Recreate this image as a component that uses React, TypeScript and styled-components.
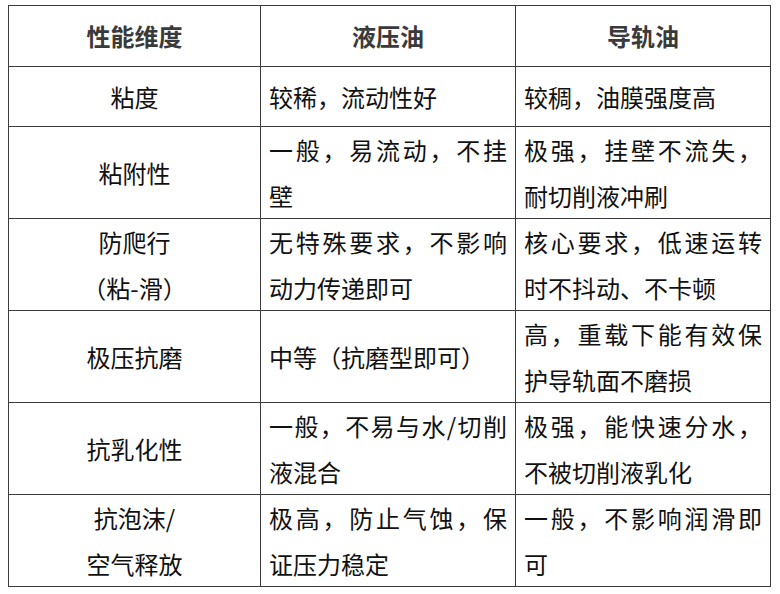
import styled, { createGlobalStyle } from "styled-components";

const GlobalStyle = createGlobalStyle`
  html, body {
    margin: 0;
    padding: 0;
    background: #ffffff;
  }
`;

const Page = styled.div`
  padding: 5px 11px 0 8px;
  font-family: "Noto Sans CJK SC", "Noto Sans", sans-serif;
`;

const Table = styled.table`
  width: 762px;
  border-collapse: collapse;
  table-layout: fixed;
`;

const HeadCell = styled.th`
  border: 1px solid #3c3c3c;
  padding: 7px 8px;
  font-size: 24px;
  font-weight: 700;
  color: #3a3a3a;
  text-align: center;
  vertical-align: middle;
  line-height: 46px;
`;

const Cell = styled.td<{ $center?: boolean; $tall?: boolean }>`
  border: 1px solid #3c3c3c;
  padding: ${({ $tall }) => ($tall ? "0 8px" : "6.75px 8px")};
  font-size: 24px;
  color: #111;
  line-height: 45.5px;
  vertical-align: middle;
  text-align: ${({ $center }) => ($center ? "center" : "justify")};
  word-break: break-all;
`;

const rows: { name: string[]; hydraulic: string; guide: string; tall?: boolean }[] = [
  { name: ["粘度"], hydraulic: "较稀，流动性好", guide: "较稠，油膜强度高" },
  { name: ["粘附性"], hydraulic: "一般，易流动，不挂壁", guide: "极强，挂壁不流失，耐切削液冲刷", tall: true },
  { name: ["防爬行", "（粘-滑）"], hydraulic: "无特殊要求，不影响动力传递即可", guide: "核心要求，低速运转时不抖动、不卡顿", tall: true },
  { name: ["极压抗磨"], hydraulic: "中等（抗磨型即可）", guide: "高，重载下能有效保护导轨面不磨损", tall: true },
  { name: ["抗乳化性"], hydraulic: "一般，不易与水/切削液混合", guide: "极强，能快速分水，不被切削液乳化", tall: true },
  { name: ["抗泡沫/", "空气释放"], hydraulic: "极高，防止气蚀，保证压力稳定", guide: "一般，不影响润滑即可", tall: true },
];

export default function App() {
  return (
    <>
      <GlobalStyle />
      <Page>
        <Table>
          <colgroup>
            <col style={{ width: 252 }} />
            <col style={{ width: 255 }} />
            <col style={{ width: 255 }} />
          </colgroup>
          <thead>
            <tr>
              <HeadCell>性能维度</HeadCell>
              <HeadCell>液压油</HeadCell>
              <HeadCell>导轨油</HeadCell>
            </tr>
          </thead>
          <tbody>
            {rows.map((r) => (
              <tr key={r.name.join("")}>
                <Cell $center $tall={r.tall}>
                  {r.name.map((line, i) => (
                    <div key={i}>{line}</div>
                  ))}
                </Cell>
                <Cell $tall={r.tall}>{r.hydraulic}</Cell>
                <Cell $tall={r.tall}>{r.guide}</Cell>
              </tr>
            ))}
          </tbody>
        </Table>
      </Page>
    </>
  );
}
